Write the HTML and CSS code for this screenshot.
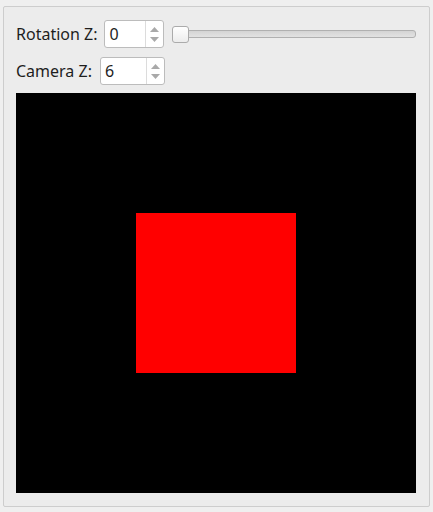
FILE: index.html
```html
<!DOCTYPE html>
<html>
<head>
<meta charset="utf-8">
<link rel="stylesheet" href="styles.css">
</head>
<body>
<div class="group">
  <div class="row">
    <span class="label">Rotation Z:</span>
    <div class="spin spin-rot">
      <span class="val">0</span>
      <div class="btns">
        <svg width="9" height="5" viewBox="0 0 9 5"><path d="M0 5 L4.5 0 L9 5 Z" fill="#a9a9a9"/></svg>
        <svg width="9" height="5" viewBox="0 0 9 5"><path d="M0 0 L4.5 5 L9 0 Z" fill="#a9a9a9"/></svg>
      </div>
    </div>
    <div class="slider">
      <div class="groove"></div>
      <div class="handle"></div>
    </div>
  </div>
  <div class="row row2">
    <span class="label">Camera Z:</span>
    <div class="spin spin-cam">
      <span class="val">6</span>
      <div class="btns">
        <svg width="9" height="5" viewBox="0 0 9 5"><path d="M0 5 L4.5 0 L9 5 Z" fill="#a9a9a9"/></svg>
        <svg width="9" height="5" viewBox="0 0 9 5"><path d="M0 0 L4.5 5 L9 0 Z" fill="#a9a9a9"/></svg>
      </div>
    </div>
  </div>
  <div class="canvas">
    <div class="square"></div>
  </div>
</div>
</body>
</html>
```
FILE: styles.css
```css
html, body {
  margin: 0;
  padding: 0;
  background: #efefef;
  width: 433px;
  height: 512px;
  overflow: hidden;
  font-family: "Noto Sans", "Open Sans", sans-serif;
  font-size: 16px;
  color: #1e1e1e;
}
.group {
  box-sizing: border-box;
  margin: 6px 3px 0 3px;
  width: 427px;
  height: 501px;
  border: 1px solid #cdcdcd;
  border-radius: 2px;
  background: #ececec;
  padding: 13px 12px 0 12px;
  display: flex;
  flex-direction: column;
}
.row {
  display: flex;
  align-items: center;
  height: 28px;
}
.row2 {
  margin-top: 9px;
}
.label {
  line-height: 28px;
  white-space: nowrap;
}
.spin {
  box-sizing: border-box;
  height: 28px;
  background: #fff;
  border: 1px solid #bcbcbc;
  border-radius: 3px;
  display: flex;
  align-items: stretch;
}
.spin-rot {
  margin-left: 7px;
  width: 60px;
}
.spin-cam {
  margin-left: 8px;
  width: 65px;
}
.val {
  flex: 1;
  padding-left: 4px;
  line-height: 26px;
}
.btns {
  width: 17px;
  border-left: 1px solid #dcdcdc;
  display: flex;
  flex-direction: column;
  align-items: center;
  justify-content: center;
  gap: 5px;
}
.btns svg {
  display: block;
}
.slider {
  flex: 1;
  margin-left: 8px;
  margin-right: 1px;
  height: 18px;
  position: relative;
  display: flex;
  align-items: center;
}
.groove {
  flex: 1;
  box-sizing: border-box;
  height: 8px;
  border: 1px solid #b0b0b0;
  border-radius: 3px;
  background: linear-gradient(#d4d4d4, #e2e2e2);
}
.handle {
  position: absolute;
  left: 0;
  top: 1px;
  box-sizing: border-box;
  width: 17px;
  height: 17px;
  border: 1px solid #ababab;
  border-radius: 3px;
  background: linear-gradient(#ffffff, #ececec);
}
.canvas {
  margin-top: 8px;
  width: 400px;
  height: 400px;
  background: #000;
  display: flex;
  align-items: center;
  justify-content: center;
}
.square {
  width: 160px;
  height: 160px;
  background: #ff0000;
}
```
